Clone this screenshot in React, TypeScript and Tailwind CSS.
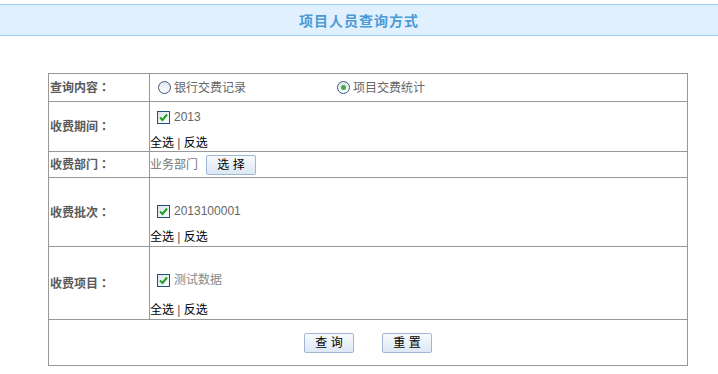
import React from "react";

const font = { fontFamily: '"Liberation Sans", "Noto Sans CJK SC", sans-serif' };

function Radio({ checked }: { checked?: boolean }) {
  return (
    <span className="inline-flex h-[13px] w-[13px] items-center justify-center rounded-full border border-[#3c5a7a] bg-gradient-to-b from-[#dfe6ee] to-white">
      {checked && <span className="h-[5px] w-[5px] rounded-full bg-[#3fae3f]" />}
    </span>
  );
}

function Check() {
  return (
    <span className="inline-flex h-[13px] w-[13px] items-center justify-center border border-[#1c5180] bg-gradient-to-br from-[#dce4ec] to-white">
      <svg width="9" height="9" viewBox="0 0 9 9">
        <path d="M1 4.5 L3.5 7 L8 1.5" stroke="#21a121" strokeWidth="2" fill="none" />
      </svg>
    </span>
  );
}

function Btn({ children }: { children: React.ReactNode }) {
  return (
    <button className="h-[20px] w-[50px] rounded-[2px] border border-[#9fb7d2] bg-gradient-to-b from-[#f7fafd] to-[#dce8f5] text-[12px] leading-none text-black">
      {children}
    </button>
  );
}

function Pick() {
  return (
    <div className="text-[12px] leading-[16px] text-black">
      全选 <span className="text-[#555]">|</span> 反选
    </div>
  );
}

// label text with a centred full-width colon
function Label({ text }: { text: string }) {
  return (
    <>
      {text}
      <span className="font-['Noto_Sans_CJK_TC',sans-serif]">：</span>
    </>
  );
}

const label = "border border-[#999] pl-[1px] text-[12px] font-bold text-[#5a5a5a] align-middle";
const cell = "border border-[#999] p-0 align-top text-[12px]";
const midCell = "border border-[#999] p-0 align-middle text-[12px]";

export default function App() {
  return (
    <div className="min-h-[374px] bg-white" style={font}>
      <div className="mt-[4px] flex h-[32px] items-center justify-center border-y border-[#9ccdf5] bg-[#e0f0ff] pt-[3px]">
        <span className="text-[14px] font-bold tracking-[1px] text-[#4b9ad6]">项目人员查询方式</span>
      </div>

      <table className="ml-[48px] mt-[37px] w-[640px] border-collapse">
        <tbody>
          <tr className="h-[28px]">
            <td className={label + " w-[101px]"}><Label text="查询内容" /></td>
            <td className={midCell}>
              <div className="flex items-center text-[#666]">
                <span className="ml-[8px] mr-[3px] inline-flex"><Radio /></span>
                <span>银行交费记录</span>
                <span className="ml-[91px] mr-[3px] inline-flex"><Radio checked /></span>
                <span>项目交费统计</span>
              </div>
            </td>
          </tr>
          <tr className="h-[50px]">
            <td className={label}><Label text="收费期间" /></td>
            <td className={cell}>
              <div className="ml-[7px] mt-[7px] flex h-[16px] items-center gap-[4px] text-[#666]">
                <Check />
                <span>2013</span>
              </div>
              <div className="mt-[10px]"><Pick /></div>
            </td>
          </tr>
          <tr className="h-[26px]">
            <td className={label}><Label text="收费部门" /></td>
            <td className={midCell}>
              <div className="flex items-center text-[#777]">
                <span>业务部门</span>
                <span className="ml-[8px] inline-flex"><Btn>选&nbsp;择</Btn></span>
              </div>
            </td>
          </tr>
          <tr className="h-[69px]">
            <td className={label}><Label text="收费批次" /></td>
            <td className={cell}>
              <div className="ml-[7px] mt-[25px] flex h-[16px] items-center gap-[4px] text-[#666]">
                <Check />
                <span>2013100001</span>
              </div>
              <div className="mt-[10px]"><Pick /></div>
            </td>
          </tr>
          <tr className="h-[73px]">
            <td className={label}><Label text="收费项目" /></td>
            <td className={cell}>
              <div className="ml-[7px] mt-[25px] flex h-[16px] items-center gap-[4px] text-[#888]">
                <Check />
                <span>测试数据</span>
              </div>
              <div className="mt-[14px]"><Pick /></div>
            </td>
          </tr>
          <tr className="h-[46px]">
            <td colSpan={2} className="border border-[#999] align-middle">
              <div className="flex justify-center gap-[28px]">
                <Btn>查&nbsp;询</Btn>
                <Btn>重&nbsp;置</Btn>
              </div>
            </td>
          </tr>
        </tbody>
      </table>
    </div>
  );
}
